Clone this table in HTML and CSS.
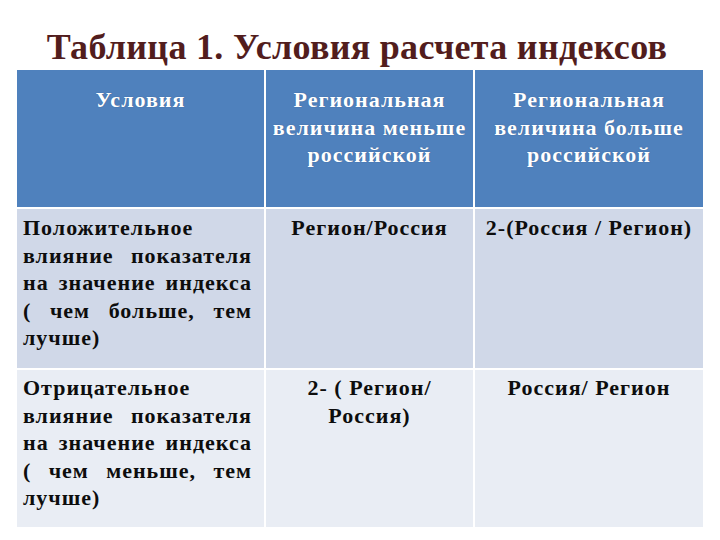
FILE: index.html
```html
<!DOCTYPE html>
<html lang="ru">
<head>
<meta charset="utf-8">
<link rel="stylesheet" href="styles.css">
</head>
<body>
<h1 class="title">Таблица 1. Условия расчета индексов</h1>
<div class="grid" role="table">
  <div class="cell head" role="columnheader">Условия</div>
  <div class="cell head" role="columnheader">Региональная величина меньше российской</div>
  <div class="cell head" role="columnheader">Региональная величина больше российской</div>

  <div class="cell row1 cond" role="cell">Положительное влияние показателя на значение индекса ( чем больше, тем лучше)</div>
  <div class="cell row1 val" role="cell">Регион/Россия</div>
  <div class="cell row1 val" role="cell">2-(Россия / Регион)</div>

  <div class="cell row2 cond" role="cell">Отрицательное влияние показателя на значение индекса ( чем меньше, тем лучше)</div>
  <div class="cell row2 val" role="cell">2- ( Регион/ Россия)</div>
  <div class="cell row2 val" role="cell">Россия/ Регион</div>
</div>
</body>
</html>
```
FILE: styles.css
```css
html, body {
  margin: 0;
  padding: 0;
  background: #ffffff;
}
body {
  width: 720px;
  height: 540px;
  overflow: hidden;
  font-family: "Liberation Serif", "Times New Roman", serif;
}
.title {
  margin: 0;
  padding: 27px 6px 0 0;
  height: 43px;
  text-align: center;
  font-size: 36px;
  line-height: 40px;
  letter-spacing: 0.3px;
  font-weight: bold;
  color: #521d1d;
}
.grid {
  display: grid;
  grid-template-columns: 247px 207px 228px;
  grid-template-rows: 137px 159px 157px;
  gap: 2px;
  margin-left: 17px;
  width: max-content;
}
.cell {
  font-weight: bold;
  font-size: 22px;
  line-height: 27.5px;
  letter-spacing: 1px;
  color: #0d0d0d;
}
.head {
  background: #4f81bd;
  color: #ffffff;
  text-align: center;
  padding: 16px 4px 0;
  text-shadow: 0 0 1px rgba(30, 50, 90, 0.5);
}
.row1 {
  background: #d0d8e8;
  padding: 5px 12px 0 6px;
}
.row2 {
  background: #e9edf4;
  padding: 4px 12px 0 6px;
}
.cond {
  text-align: justify;
}
.val {
  text-align: center;
  padding-left: 8px;
  padding-right: 8px;
}
```
